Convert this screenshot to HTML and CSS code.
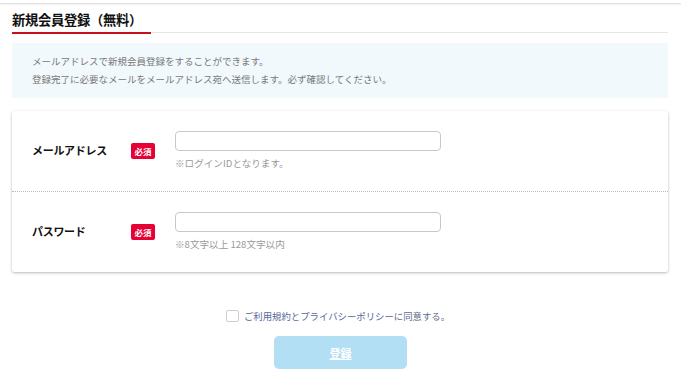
FILE: index.html
```html
<!DOCTYPE html>
<html lang="ja">
<head>
<meta charset="utf-8">
<title>新規会員登録（無料）</title>
<link rel="stylesheet" href="styles.css">
</head>
<body>
<div class="topbar"></div>
<main class="page">
  <div class="title-wrap">
    <h1 class="title">新規会員登録（無料）</h1>
  </div>
  <div class="info">
    <p>メールアドレスで新規会員登録をすることができます。</p>
    <p>登録完了に必要なメールをメールアドレス宛へ送信します。必ず確認してください。</p>
  </div>
  <form class="card">
    <div class="row">
      <div class="label">メールアドレス</div>
      <span class="badge">必須</span>
      <div class="field">
        <input class="input" type="text">
        <div class="hint">※ログインIDとなります。</div>
      </div>
    </div>
    <div class="row">
      <div class="label">パスワード</div>
      <span class="badge">必須</span>
      <div class="field">
        <input class="input" type="password">
        <div class="hint">※8文字以上 128文字以内</div>
      </div>
    </div>
  </form>
  <div class="agree">
    <span class="check"></span>
    <span class="agree-text"><a class="link">ご利用規約</a>と<a class="link">プライバシーポリシー</a>に同意する。</span>
  </div>
  <div class="actions">
    <button class="submit" type="button"><span>登録</span></button>
  </div>
</main>
</body>
</html>
```
FILE: styles.css
```css
* { box-sizing: border-box; }
html, body { margin: 0; padding: 0; background: #fff; }
body {
  font-family: "Noto Sans CJK JP", "Noto Sans", sans-serif;
  color: #333;
}
.topbar {
  height: 4px;
  border-bottom: 1px solid #e2e2e2;
  box-shadow: 0 1px 2px rgba(0,0,0,0.06);
}
.page {
  margin: 0 13px 0 12px;
}
.title-wrap {
  margin-top: 9px;
  border-bottom: 1px solid #e6e6e6;
  height: 20px;
  line-height: 14px;
}
.title {
  display: inline-block;
  vertical-align: top;
  margin: 0;
  padding: 0 9px 0 0;
  height: 21px;
  font-size: 13.3px;
  line-height: 14px;
  font-weight: bold;
  color: #111;
  border-bottom: 2px solid #c4121c;
  letter-spacing: -0.3px;
}
.info {
  margin-top: 10px;
  background: #f2f9fd;
  padding: 9px 20px 10px;
  height: 55px;
}
.info p {
  margin: 0;
  font-size: 9.5px;
  line-height: 18px;
  color: #777;
}
.card {
  margin-top: 13px;
  background: #fff;
  border-radius: 2px;
  box-shadow: 0 1px 3px rgba(0,0,0,0.28);
}
.row {
  display: flex;
  align-items: center;
  height: 80px;
  padding-left: 20px;
}
.row + .row {
  border-top: 1px dotted #bbb;
  height: 81px;
}
.label {
  width: 99px;
  font-size: 11px;
  font-weight: bold;
  color: #111;
  letter-spacing: -0.3px;
  margin-bottom: 3px;
}
.badge {
  width: 24px;
  height: 16px;
  background: #e60033;
  color: #fff;
  font-size: 8.5px;
  font-weight: bold;
  line-height: 16px;
  text-align: center;
  border-radius: 2px;
}
.field {
  margin-left: 20px;
  margin-bottom: 2px;
}
.input {
  display: block;
  width: 266px;
  height: 20px;
  border: 1px solid #c8c8c8;
  border-radius: 4px;
  background: #fff;
  margin: 0;
  padding: 0 6px;
}
.hint {
  margin-top: 6px;
  font-size: 9.6px;
  line-height: 12px;
  color: #999;
}
.agree {
  display: flex;
  align-items: center;
  justify-content: center;
  margin-top: 38px;
  gap: 5px;
  padding-right: 4px;
}
.check {
  width: 13px;
  height: 12px;
  border: 1px solid #cfcfcf;
  border-radius: 2px;
  background: #fff;
}
.agree-text {
  font-size: 9.4px;
  line-height: 12px;
  color: #5f6b8c;
}
.link { color: #56679a; }
.actions {
  display: flex;
  justify-content: center;
  margin-top: 14px;
  padding-left: 1px;
}
.submit {
  width: 133px;
  height: 33px;
  border: none;
  border-radius: 5px;
  background: #b3dff4;
  color: #fff;
  font-family: "Noto Sans CJK JP", sans-serif;
  font-size: 11px;
  font-weight: bold;
  padding: 0;
}
.submit span {
  text-decoration: underline;
}
```
